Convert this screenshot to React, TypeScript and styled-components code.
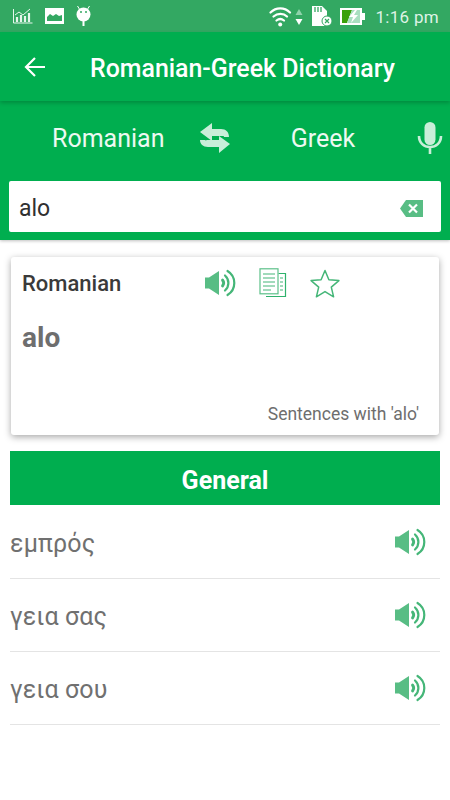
import React from 'react';
import styled, { createGlobalStyle } from 'styled-components';

const GlobalStyle = createGlobalStyle`
  html, body {
    margin: 0;
    padding: 0;
    background: #fff;
    font-family: Roboto, "Noto Sans", sans-serif;
  }
`;

const Page = styled.div`
  width: 450px;
  height: 800px;
  overflow: hidden;
  background: #fff;
`;

const StatusBar = styled.div`
  height: 32px;
  background: #33a862;
  display: flex;
  align-items: center;
  justify-content: space-between;
  padding: 0 11px 0 13px;
  color: #dff3e6;
`;

const StatusGroup = styled.div<{ $gap: number }>`
  display: flex;
  align-items: center;
  gap: ${(p) => p.$gap}px;
`;

const Clock = styled.span`
  font-size: 17px;
  letter-spacing: 0.3px;
  margin-left: 2px;
  margin-top: 1px;
`;

const AppBar = styled.header`
  position: relative;
  height: 69px;
  background: #00ae4f;
  display: flex;
  align-items: center;
  padding-left: 24px;
  box-shadow: 0 2px 4px rgba(0, 0, 0, 0.2);
  color: #fff;
`;

const Title = styled.h1`
  margin: 4px 0 0 44px;
  font-size: 24.900px;
  font-weight: 500;
  white-space: nowrap;
`;

const GreenPanel = styled.div`
  height: 139px;
  background: #00ae4f;
  display: flex;
  flex-direction: column;
  align-items: center;
  box-shadow: 0 1px 3px rgba(0, 0, 0, 0.25);
`;

const LangRow = styled.div`
  width: 450px;
  height: 74px;
  margin-bottom: 6px;
  display: grid;
  grid-template-columns: 52px 112px 35px 32px 184px 1fr;
  align-items: center;
  color: #fff;
`;

const LangName = styled.span<{ $col: number }>`
  grid-column: ${(p) => p.$col};
  font-size: 25px;
  white-space: nowrap;
  color: #edf9f1;
`;

const CenteredLang = styled(LangName)`
  justify-self: center;
`;

const SwapCell = styled.div`
  grid-column: 4;
  display: flex;
`;

const MicCell = styled.div`
  grid-column: 6;
  display: flex;
  padding-left: 2px;
`;

const SearchBox = styled.div`
  width: 432px;
  height: 51px;
  box-sizing: border-box;
  background: #fff;
  border-radius: 2px;
  display: flex;
  align-items: center;
  justify-content: space-between;
  padding: 3px 18px 0 10px;
  font-size: 23px;
  color: #303030;
`;

const Card = styled.section`
  width: 428px;
  height: 178px;
  box-sizing: border-box;
  margin: 17px 0 16px 11px;
  padding: 11px 11px 10px;
  background: #fff;
  border-radius: 3px;
  box-shadow: 0 2px 7px rgba(0, 0, 0, 0.35);
  display: flex;
  flex-direction: column;
`;

const CardHead = styled.div`
  display: flex;
  align-items: center;
  height: 30px;
`;

const CardLang = styled.span`
  width: 182px;
  font-size: 22px;
  font-weight: 500;
  color: #3a3a3a;
`;

const CardTools = styled.div`
  display: flex;
  align-items: center;
  gap: 23px;
`;

const Word = styled.div`
  margin-top: 23px;
  font-size: 28px;
  font-weight: 700;
  color: #6e6e6e;
  flex: 1;
`;

const Sentences = styled.div`
  align-self: flex-end;
  margin-right: 9px;
  margin-bottom: 1px;
  font-size: 17.500px;
  color: #6e6e6e;
`;

const SectionBar = styled.div`
  margin: 0 10px;
  height: 54px;
  box-sizing: border-box;
  padding-top: 4px;
  background: #00ae4f;
  display: flex;
  align-items: center;
  justify-content: center;
  font-size: 25px;
  font-weight: 700;
  color: #fff;
`;

const List = styled.ul`
  list-style: none;
  margin: 0 10px;
  padding: 1px 0 0;
`;

const Row = styled.li`
  height: 73px;
  box-sizing: border-box;
  border-bottom: 1px solid #e4e4e4;
  display: flex;
  align-items: center;
  justify-content: space-between;
  padding-right: 14px;
`;

const RowText = styled.span`
  margin-top: 3px;
  font-size: 25px;
  letter-spacing: 0.15px;
  color: #707070;
`;

const Speaker = () => (
  <svg width="32" height="28" viewBox="0 0 32 28" fill="none">
    <path d="M1 8.500h4L15 2v24L5 19.500H1z" fill="#58bd84" />
    <g stroke="#45b678" strokeLinecap="round">
      <path d="M18.500 11q2.500 3 0 6" strokeWidth="2.800" />
      <path d="M21 6.500a10 10 0 0 1 0 15" strokeWidth="2.200" />
      <path d="M23.500 2a14 14 0 0 1 0 24" strokeWidth="2.200" />
    </g>
  </svg>
);

const CopyIcon = () => (
  <svg width="28" height="30" viewBox="0 0 28 30" fill="none" stroke="#5cc089" strokeWidth="1.200">
    <path d="M7 28.500h19.500V5.500h-7" stroke="#2fb26c" />
    <rect x="1" y="0.800" width="18" height="25" fill="#fff" />
    <path d="M4 6h12M4 10h12M4 14h12M4 18h12M4 22h8" stroke="#45b678" />
    <path d="M21 10h3M21 14h3M21 18h3M21 22h3" stroke="#45b678" />
  </svg>
);

const StarIcon = () => (
  <svg width="30" height="29" viewBox="0 0 30 29" fill="none">
    <path
      d="M15 1.500l3.900 9.300 10 .8-7.600 6.500 2.300 9.700L15 22.600l-8.600 5.200 2.300-9.700-7.600-6.500 10-.8z"
      stroke="#45b678"
      strokeWidth="1.500"
      strokeLinejoin="round"
    />
  </svg>
);

const BackArrow = () => (
  <svg width="22" height="22" viewBox="0 0 22 22" fill="none" stroke="#fff" strokeWidth="2.200">
    <path d="M21 11H2M11 2l-9 9 9 9" />
  </svg>
);

const SwapIcon = () => (
  <svg width="32" height="32" viewBox="0 0 32 32" fill="#c9eed9">
    <path d="M1 10 13 1v6h9c5 0 8 3 8 8h-5c0-1.500-1-1-3-1h-9v5z" />
    <path d="M31 22 20 31v-6h-11c-5 0-8-3-8-7h5c0 1 1 0 3 0h11v-4z" />
  </svg>
);

const MicIcon = () => (
  <svg width="26" height="32" viewBox="0 0 26 32" fill="none">
    <rect x="7.500" y="0" width="11" height="23" rx="5.500" fill="#c9eed9" />
    <path d="M2 14c0 7 5 11 11 11s11-4 11-11M13 25v7" stroke="#c9eed9" strokeWidth="2.600" />
  </svg>
);

const ClearIcon = () => (
  <svg width="23" height="17" viewBox="0 0 23 17">
    <path d="M6 0h17v17H6L0 8.500z" fill="#58bd84" />
    <path d="M9 4.500l8 8M17 4.500l-8 8" stroke="#fff" strokeWidth="2.200" />
  </svg>
);

const ChartGlyph = () => (
  <svg width="20" height="16" viewBox="0 0 20 16" fill="none" stroke="#e6f6ec" strokeWidth="1">
    <path d="M.5 1v14h19" />
    <path d="M2 7l4-3 4 3 7-6" />
    <path d="M4 14V9M8 14V7M12 14V8M16 14V5" strokeWidth="2.200" />
  </svg>
);

const PictureGlyph = () => (
  <svg width="19" height="16" viewBox="0 0 19 16">
    <path d="M0 0h19v16H0z" fill="#fff" />
    <path d="M2 13V9l3-3 3 2 3-2 3 2 3-1v6z" fill="#33a862" />
  </svg>
);

const BugGlyph = () => (
  <svg width="15" height="20" viewBox="0 0 15 20" fill="#fff">
    <path d="M1.500 0l2.500 4M13.500 0l-2.500 4" stroke="#fff" />
    <circle cx="7.500" cy="8.500" r="7" />
    <rect x="6.500" y="14" width="2" height="6" />
    <circle cx="5" cy="6" r="1" fill="#33a862" />
    <circle cx="10" cy="6" r="1" fill="#33a862" />
  </svg>
);

const WifiGlyph = () => (
  <svg width="35" height="21" viewBox="0 0 35 21" fill="none" stroke="#fff" strokeWidth="2.200" strokeLinecap="round">
    <path d="M1.500 6.500c5.500-5.500 14-5.500 19.500 0M4.500 10.500c4-3.500 10-3.500 13.500 0M7.500 14.500c2.500-2 5-2 7.500 0" />
    <circle cx="11.200" cy="18.500" r="2" fill="#fff" stroke="none" />
    <path d="M30 3l3.500 6h-7z" fill="#8fd3ab" stroke="none" />
    <path d="M30 19l3.500-6h-7z" fill="#fff" stroke="none" />
  </svg>
);

const SdGlyph = () => (
  <svg width="20" height="20" viewBox="0 0 20 20">
    <path d="M0 0h10l5 5v15H0z" fill="#fff" />
    <path d="M3 1v5M6 1v5M9 1v5" stroke="#33a862" strokeWidth="1.300" />
    <circle cx="15" cy="15" r="5" fill="#fff" stroke="#33a862" />
    <path d="M13 13l4 4M17 13l-4 4" stroke="#33a862" strokeWidth="1.200" />
  </svg>
);

const BatteryGlyph = () => (
  <svg width="25" height="17" viewBox="0 0 25 17">
    <path d="M0 0h22v5h3v7h-3v5H0z" fill="#fff" />
    <path d="M2 2h10l-5 13H2z" fill="#3aa10a" />
    <path d="M7 15l5-13h8v13z" fill="#a9dfc0" />
    <path d="M15 2l-6 7h4l-2 6 7-8h-4l3-5z" fill="#fff" />
  </svg>
);

const translations = ['εμπρός', 'γεια σας', 'γεια σου'];

const App = () => (
  <Page>
    <GlobalStyle />
    <StatusBar>
      <StatusGroup $gap={12}>
        <ChartGlyph />
        <PictureGlyph />
        <BugGlyph />
      </StatusGroup>
      <StatusGroup $gap={8}>
        <WifiGlyph />
        <SdGlyph />
        <BatteryGlyph />
        <Clock>1:16 pm</Clock>
      </StatusGroup>
    </StatusBar>
    <AppBar>
      <BackArrow />
      <Title>Romanian-Greek Dictionary</Title>
    </AppBar>
    <GreenPanel>
      <LangRow>
        <LangName $col={2}>Romanian</LangName>
        <SwapCell>
          <SwapIcon />
        </SwapCell>
        <CenteredLang $col={5}>Greek</CenteredLang>
        <MicCell>
          <MicIcon />
        </MicCell>
      </LangRow>
      <SearchBox>
        alo
        <ClearIcon />
      </SearchBox>
    </GreenPanel>
    <Card>
      <CardHead>
        <CardLang>Romanian</CardLang>
        <CardTools>
          <Speaker />
          <CopyIcon />
          <StarIcon />
        </CardTools>
      </CardHead>
      <Word>alo</Word>
      <Sentences>Sentences with 'alo'</Sentences>
    </Card>
    <SectionBar>General</SectionBar>
    <List>
      {translations.map((text) => (
        <Row key={text}>
          <RowText>{text}</RowText>
          <Speaker />
        </Row>
      ))}
    </List>
  </Page>
);

export default App;
